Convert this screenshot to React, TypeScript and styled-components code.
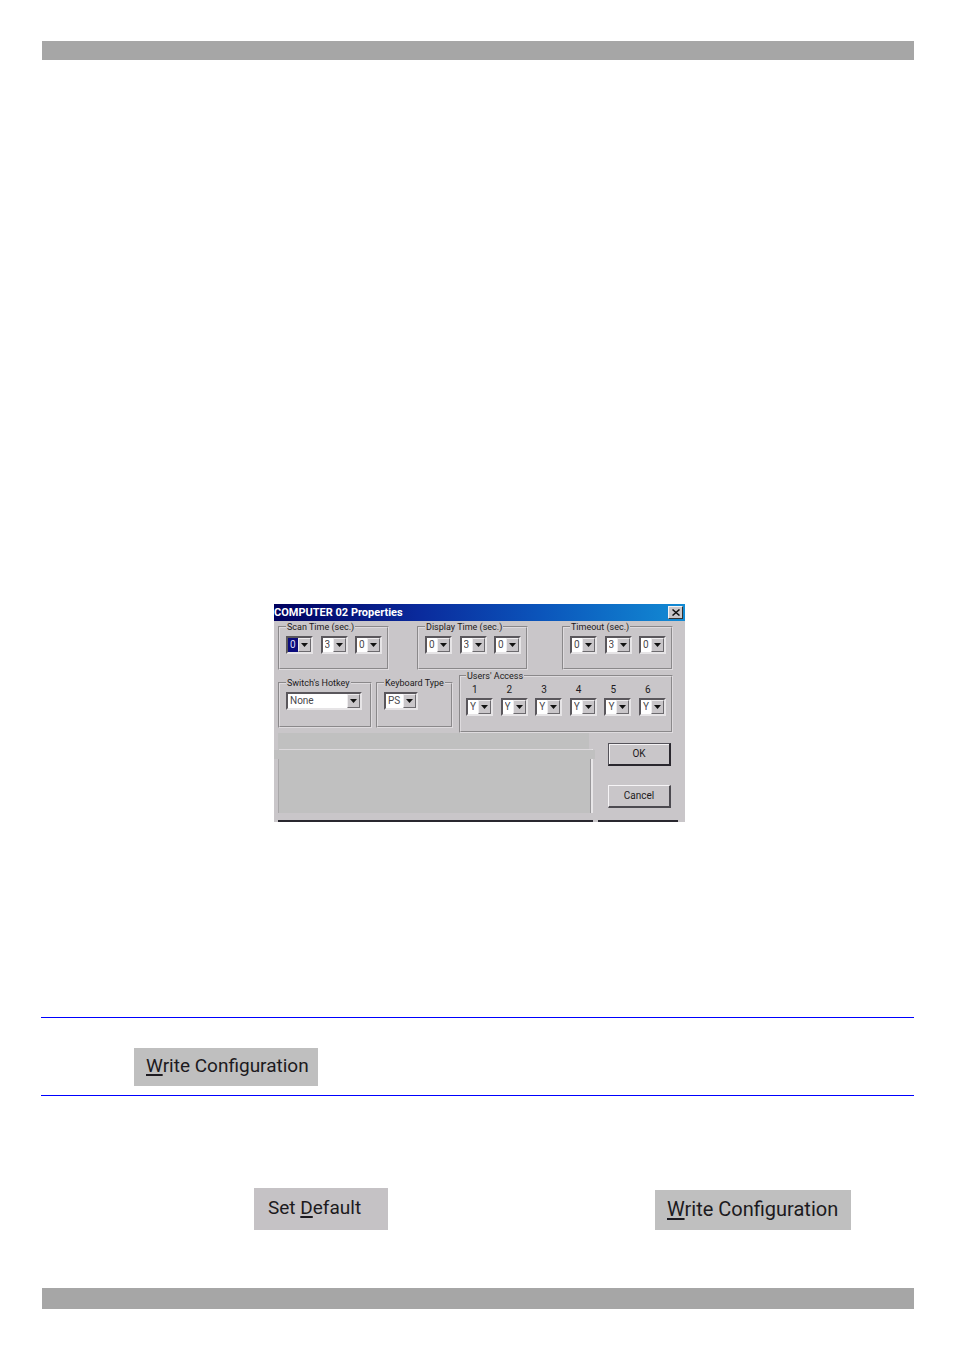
import React, { useId } from 'react';
import styled, { createGlobalStyle, css } from 'styled-components';

const face = '#c9c6c9';
const silver = '#c0c0c0';
const ink = '#1c1a20';

const GlobalStyle = createGlobalStyle`
  *, *::before, *::after { box-sizing: border-box; }
  body { margin: 0; background: #fff; color: ${ink}; font-family: Roboto, "Liberation Sans", sans-serif; }
`;

const Page = styled.div`
  display: flex;
  flex-direction: column;
  padding: 41px 40px 46px 42px;
`;

const Band = styled.div<{ $height: number }>`
  height: ${(p) => p.$height}px;
  background: #a6a6a6;
`;

const Main = styled.main`
  display: flex;
  flex-direction: column;
  padding-top: 544px;
  padding-bottom: 58px;
`;

const DialogArea = styled.section`
  display: flex;
  justify-content: center;
  padding-left: 3px;
  margin-bottom: 195px;
`;

const Dialog = styled.div`
  width: 411px;
  background: ${face};
  font-size: 10px;
  line-height: 10px;
`;

const TitleBar = styled.header`
  display: flex;
  align-items: center;
  justify-content: space-between;
  height: 17px;
  padding-right: 2px;
  background: linear-gradient(90deg, #00005e 0%, #0a2a9c 35%, #0b55bb 65%, #128bd4 100%);
`;

const Title = styled.h1`
  margin: 0;
  color: #fff;
  font-size: 11px;
  line-height: 16px;
  font-weight: 700;
`;

const CloseButton = styled.button`
  display: flex;
  align-items: center;
  justify-content: center;
  width: 15px;
  height: 13px;
  padding: 0;
  border: 1px solid;
  border-color: #f4f2f4 #333 #333 #f4f2f4;
  background: ${face};
  color: #111;
`;

const TimeRow = styled.div`
  display: flex;
  gap: 28px;
  padding: 1px 12px 0 4px;

  > :last-child { margin-left: auto; }
`;

const AccessRow = styled.div`
  display: flex;
  align-items: flex-start;
  gap: 4px;
  padding: 1px 12px 0 4px;
`;

const Group = styled.fieldset<{ $width?: number; $height: number; $drop?: boolean }>`
  min-width: 0;
  height: ${(p) => p.$height}px;
  margin: ${(p) => (p.$drop ? '7px 0 0' : '0')};
  padding: 4px 5px 0 6px;
  border: 2px groove #dedbde;
  ${(p) => (p.$width ? css`width: ${p.$width}px;` : css`flex: 1; margin-left: 2px; padding-left: 5px;`)}
`;

const Legend = styled.legend`
  padding: 0 1px;
  font-size: 9px;
  white-space: nowrap;
`;

const Fields = styled.div`
  display: flex;
  justify-content: space-between;
`;

const Field = styled.div`
  display: flex;
  flex-direction: column;
  gap: 3px;
`;

const FieldLabel = styled.label`
  padding-left: 6px;
  line-height: 10px;
`;

const Combo = styled.span<{ $width: number }>`
  position: relative;
  display: block;
  width: ${(p) => p.$width}px;
  height: 18px;
  border: 2px solid;
  border-color: #5a575c #e6e4e6 #e6e4e6 #5a575c;
  background: #fff;
`;

const Select = styled.select<{ $active?: boolean }>`
  appearance: none;
  display: block;
  width: calc(100% - 13px);
  height: 14px;
  padding: 0 0 0 2px;
  border: 0;
  border-radius: 0;
  outline: 0;
  background: ${(p) => (p.$active ? '#0b0b7c' : '#fff')};
  color: ${(p) => (p.$active ? '#dcdcf4' : '#4a484c')};
  font: inherit;
  line-height: 14px;
`;

const ArrowButton = styled.span`
  position: absolute;
  top: 0;
  right: 0;
  display: flex;
  align-items: center;
  justify-content: center;
  width: 13px;
  height: 14px;
  border: 1px solid;
  border-color: #eeecee #6c6a6e #6c6a6e #eeecee;
  background: ${face};
  pointer-events: none;
`;

const Lower = styled.div`
  display: flex;
  align-items: stretch;
  height: 89px;
`;

const PanelColumn = styled.div`
  display: flex;
  flex-direction: column;
  width: 319px;
  padding-left: 4px;
`;

const PanelTop = styled.div`
  width: 311px;
  height: 16px;
  background: ${silver};
`;

const PanelBody = styled.div`
  position: relative;
  width: 315px;
  height: 64px;
  border: solid;
  border-width: 1px 2px 0 1px;
  border-color: #dddadd #e8e6e8 ${face} #a9a7a9;
  background: ${silver};
  box-shadow: inset -1px 0 0 #99979a;

  &::before,
  &::after {
    content: '';
    position: absolute;
    top: 0;
    width: 5px;
    height: 9px;
    background: ${silver};
  }
  &::before { left: -5px; }
  &::after { right: -4px; }
`;

const BottomEdge = styled.div`
  height: 2px;
  margin-top: auto;
  background: #29272f;
`;

const Actions = styled.div`
  display: flex;
  flex-direction: column;
  flex: 1;
  padding-left: 5px;
  padding-right: 7px;
`;

const ActionStack = styled.div`
  display: flex;
  flex-direction: column;
  gap: 19px;
  padding: 10px 7px 0 10px;
`;

const ActionButton = styled.button<{ $default?: boolean }>`
  height: 23px;
  padding: 0;
  border: solid;
  border-width: 1px 2px 2px 1px;
  border-color: ${(p) => (p.$default ? '#55535a #29272e #29272e #55535a' : '#f6f4f6 #4c4a50 #4c4a50 #f6f4f6')};
  background: ${face};
  color: ${ink};
  font: inherit;
  box-shadow: ${(p) => (p.$default ? 'inset 1px 1px 0 #f4f2f4' : 'none')};
`;

const Note = styled.section`
  display: flex;
  margin-left: -1px;
  padding: 30px 0 9px 93px;
  border: solid #00f;
  border-width: 1px 0;
`;

const CommandRow = styled.section`
  display: flex;
  align-items: flex-end;
  justify-content: space-between;
  margin-top: 92px;
  padding: 0 63px 0 212px;
`;

const Command = styled.button<{ $width: number; $height: number; $tint?: boolean; $size: number }>`
  width: ${(p) => p.$width}px;
  height: ${(p) => p.$height}px;
  padding: 0 0 2px ${(p) => (p.$tint ? 14 : 12)}px;
  border: 0;
  background: ${(p) => (p.$tint ? '#c5c2c5' : '#bfbfbf')};
  color: ${ink};
  font-family: inherit;
  font-size: ${(p) => p.$size}px;
  line-height: 24px;
  text-align: left;
  white-space: nowrap;
`;

const Key = styled.span`
  text-decoration: underline;
  text-decoration-thickness: 2px;
  text-underline-offset: 2px;
`;

type DropDownProps = { label?: string; id?: string; value: string; options: string[]; width?: number; active?: boolean };

function DropDown({ label, id, value, options, width = 27, active }: DropDownProps) {
  return (
    <Combo $width={width}>
      <Select id={id} aria-label={label} defaultValue={value} $active={active}>
        {options.map((o) => <option key={o}>{o}</option>)}
      </Select>
      <ArrowButton aria-hidden="true">
        <svg width="7" height="4" viewBox="0 0 7 4"><path d="M0 0h7L3.5 4z" fill="#111" /></svg>
      </ArrowButton>
    </Combo>
  );
}

const digits = ['0', '1', '2', '3', '4', '5', '6', '7', '8', '9'];
const places = ['hundreds', 'tens', 'units'];

function TimeGroup({ name, active }: { name: string; active?: boolean }) {
  return (
    <Group $width={111} $height={48}>
      <Legend>{name} (sec.)</Legend>
      <Fields>
        {places.map((place, i) => (
          <DropDown key={place} label={`${name} ${place}`} value={i === 1 ? '3' : '0'} options={digits} active={active && i === 0} />
        ))}
      </Fields>
    </Group>
  );
}

function WriteConfiguration({ width, height, size }: { width: number; height: number; size: number }) {
  return (
    <Command type="button" $width={width} $height={height} $size={size}><Key>W</Key>rite Configuration</Command>
  );
}

export default function App() {
  const uid = useId();
  return (
    <>
      <GlobalStyle />
      <Page>
        <Band $height={19} />
        <Main>
          <DialogArea>
            <Dialog role="dialog" aria-labelledby={`${uid}-title`}>
              <TitleBar>
                <Title id={`${uid}-title`}>COMPUTER 02 Properties</Title>
                <CloseButton type="button" aria-label="Close">
                  <svg width="8" height="7" viewBox="0 0 8 7"><path d="M0.5 0.5l7 6M7.5 0.5l-7 6" stroke="currentColor" strokeWidth="1.5" /></svg>
                </CloseButton>
              </TitleBar>
              <TimeRow>
                <TimeGroup name="Scan Time" active />
                <TimeGroup name="Display Time" />
                <TimeGroup name="Timeout" />
              </TimeRow>
              <AccessRow>
                <Group $width={94} $height={50} $drop>
                  <Legend>Switch's Hotkey</Legend>
                  <DropDown label="Switch's Hotkey" value="None" options={['None']} width={76} />
                </Group>
                <Group $width={77} $height={50} $drop>
                  <Legend>Keyboard Type</Legend>
                  <DropDown label="Keyboard Type" value="PS" options={['PS']} width={34} />
                </Group>
                <Group $height={62}>
                  <Legend>Users' Access</Legend>
                  <Fields>
                    {['1', '2', '3', '4', '5', '6'].map((n) => (
                      <Field key={n}>
                        <FieldLabel htmlFor={`${uid}-user-${n}`}>{n}</FieldLabel>
                        <DropDown id={`${uid}-user-${n}`} value="Y" options={['Y', 'N']} />
                      </Field>
                    ))}
                  </Fields>
                </Group>
              </AccessRow>
              <Lower>
                <PanelColumn>
                  <PanelTop />
                  <PanelBody />
                  <BottomEdge />
                </PanelColumn>
                <Actions>
                  <ActionStack>
                    <ActionButton type="button" $default>OK</ActionButton>
                    <ActionButton type="button">Cancel</ActionButton>
                  </ActionStack>
                  <BottomEdge />
                </Actions>
              </Lower>
            </Dialog>
          </DialogArea>
          <Note>
            <WriteConfiguration width={184} height={38} size={19} />
          </Note>
          <CommandRow>
            <Command type="button" $width={134} $height={42} $size={19} $tint>Set <Key>D</Key>efault</Command>
            <WriteConfiguration width={196} height={40} size={20} />
          </CommandRow>
        </Main>
        <Band $height={21} />
      </Page>
    </>
  );
}
